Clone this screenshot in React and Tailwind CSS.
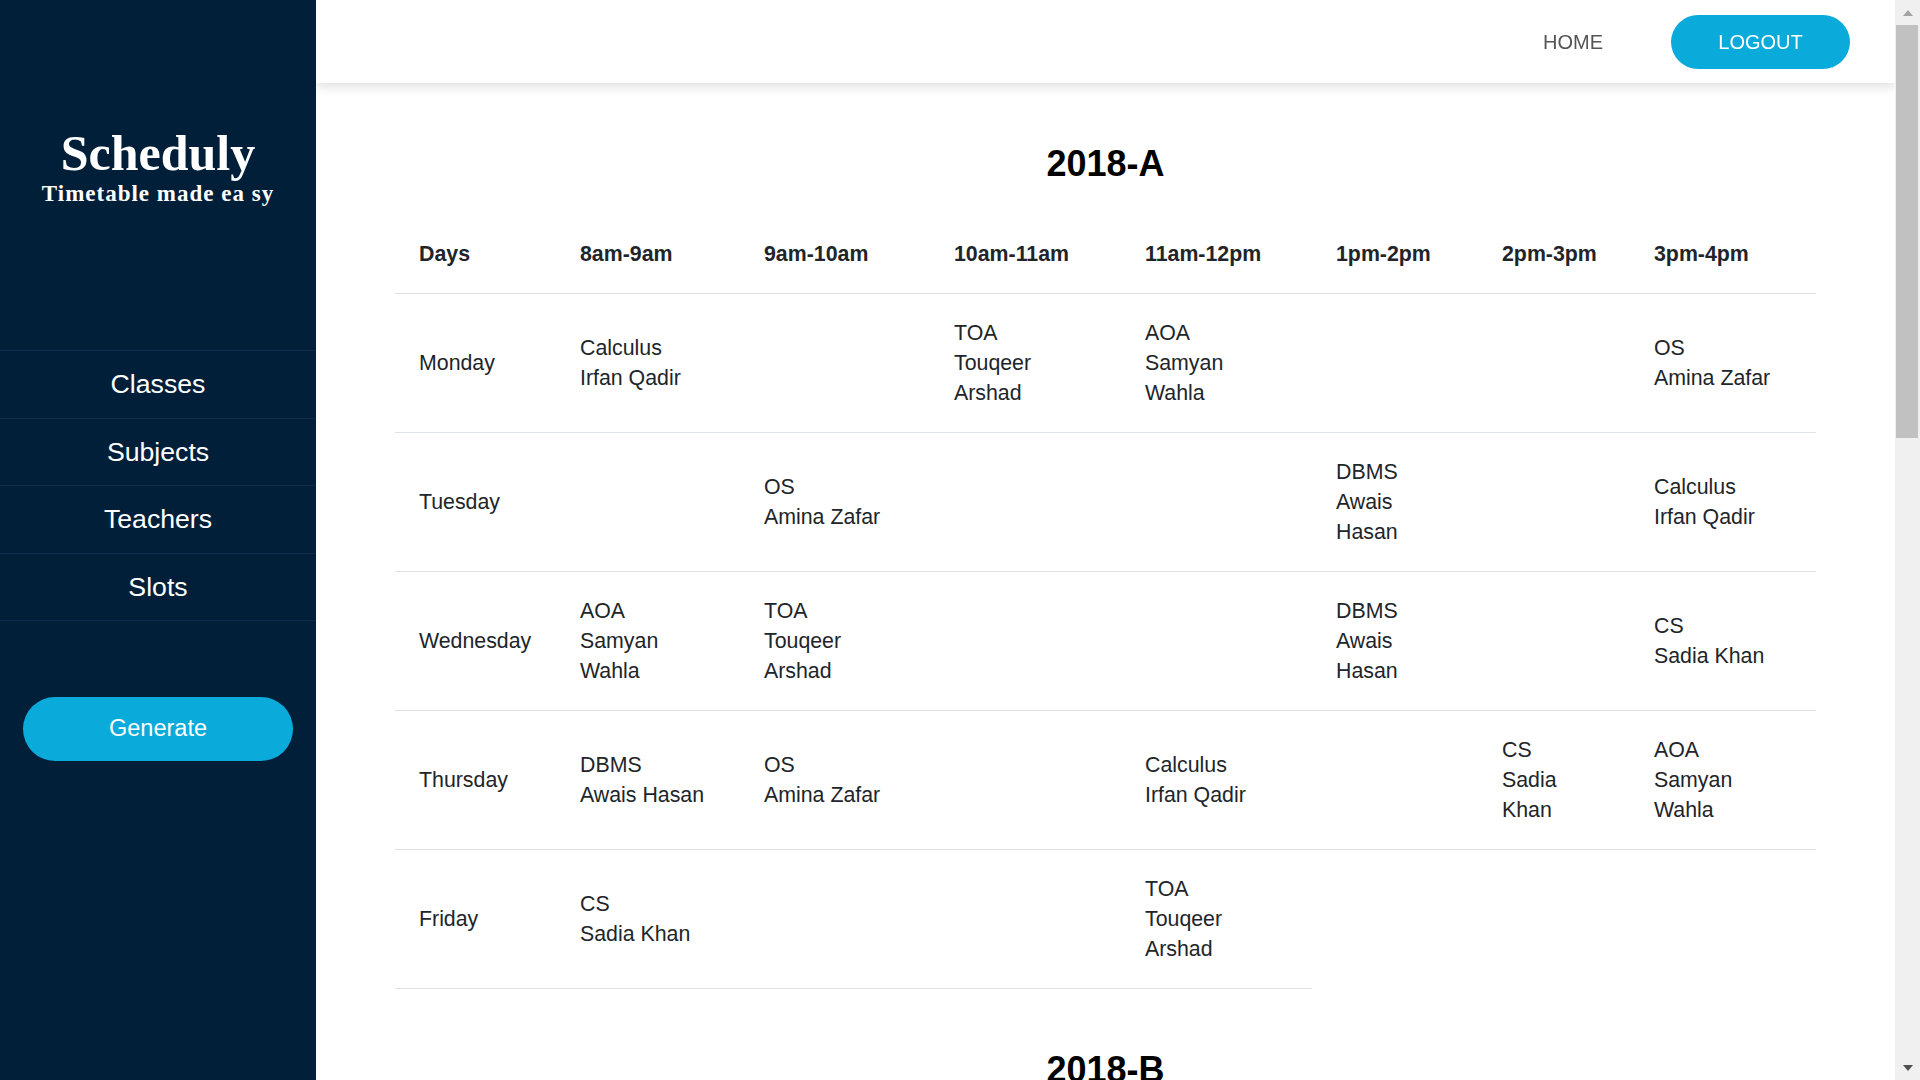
const slots = ['8am-9am', '9am-10am', '10am-11am', '11am-12pm', '1pm-2pm', '2pm-3pm', '3pm-4pm'];
const colWidths = ['w-[161px]', 'w-[184px]', 'w-[190px]', 'w-[191px]', 'w-[191px]', 'w-[166px]', 'w-[152px]', 'w-[186px]'];

const C = (subject, teacher) => ({ subject, teacher });

const timetables = [
  {
    name: '2018-A',
    rows: [
      ['Monday', [C('Calculus', 'Irfan Qadir'), null, C('TOA', 'Touqeer Arshad'), C('AOA', 'Samyan Wahla'), null, null, C('OS', 'Amina Zafar')]],
      ['Tuesday', [null, C('OS', 'Amina Zafar'), null, null, C('DBMS', 'Awais Hasan'), null, C('Calculus', 'Irfan Qadir')]],
      ['Wednesday', [C('AOA', 'Samyan Wahla'), C('TOA', 'Touqeer Arshad'), null, null, C('DBMS', 'Awais Hasan'), null, C('CS', 'Sadia Khan')]],
      ['Thursday', [C('DBMS', 'Awais Hasan'), C('OS', 'Amina Zafar'), null, C('Calculus', 'Irfan Qadir'), null, C('CS', 'Sadia Khan'), C('AOA', 'Samyan Wahla')]],
      ['Friday', [C('CS', 'Sadia Khan'), null, null, C('TOA', 'Touqeer Arshad')]],
    ],
  },
  {
    name: '2018-B',
    rows: [
      ['Monday', [C('OS', 'Amina Zafar'), C('DBMS', 'Awais Hasan'), null, C('CS', 'Sadia Khan'), null, C('TOA', 'Touqeer Arshad'), null]],
      ['Tuesday', [C('AOA', 'Samyan Wahla'), null, C('Calculus', 'Irfan Qadir'), null, C('OS', 'Amina Zafar'), null, C('DBMS', 'Awais Hasan')]],
      ['Wednesday', [null, C('CS', 'Sadia Khan'), C('TOA', 'Touqeer Arshad'), null, null, C('AOA', 'Samyan Wahla'), null]],
      ['Thursday', [C('Calculus', 'Irfan Qadir'), null, C('OS', 'Amina Zafar'), C('DBMS', 'Awais Hasan'), null, null, C('CS', 'Sadia Khan')]],
      ['Friday', [null, C('AOA', 'Samyan Wahla'), null, C('Calculus', 'Irfan Qadir'), C('TOA', 'Touqeer Arshad')]],
    ],
  },
  {
    name: '2019-A',
    rows: [
      ['Monday', [C('PF', 'Irfan Qadir'), null, C('DLD', 'Awais Hasan'), null, null, C('ENG', 'Amina Zafar'), null]],
      ['Tuesday', [null, C('ENG', 'Amina Zafar'), null, C('PF', 'Irfan Qadir'), null, null, C('DLD', 'Awais Hasan')]],
      ['Wednesday', [C('DLD', 'Awais Hasan'), null, null, C('ENG', 'Amina Zafar'), C('PF', 'Irfan Qadir'), null, null]],
      ['Thursday', [null, C('PF', 'Irfan Qadir'), C('ENG', 'Amina Zafar'), null, null, C('DLD', 'Awais Hasan'), null]],
      ['Friday', [C('ENG', 'Amina Zafar'), null, C('PF', 'Irfan Qadir')]],
    ],
  },
];

function Sidebar() {
  return (
    <aside className="w-[316px] shrink-0 h-screen bg-[#021f3a] flex flex-col text-white">
      <div className="pt-[126px] text-center font-['Liberation_Serif','Times_New_Roman',serif] font-bold">
        <div className="text-[50px] leading-[55px]">Scheduly</div>
        <div className="text-[23px] leading-[26px] tracking-[1px]">Timetable made ea sy</div>
      </div>

      <nav className="mt-[143px] border-t border-[#0b2d4b] font-['Liberation_Sans',Arial,sans-serif]">
        {['Classes', 'Subjects', 'Teachers', 'Slots'].map((item) => (
          <a
            key={item}
            href="#"
            className="h-[67.5px] flex items-center justify-center border-b border-[#0b2d4b] text-[26.67px] text-white"
          >
            {item}
          </a>
        ))}
      </nav>

      <button className="mt-[76px] mx-[23px] h-[64px] rounded-full bg-[#0aabdb] text-white text-[23.5px] font-['Liberation_Sans',Arial,sans-serif]">
        Generate
      </button>
    </aside>
  );
}

function Cell({ cell }) {
  return (
    <td className="px-[24px] py-[24px] align-middle border-b border-[#dee2e6]">
      {cell && (
        <>
          <div>{cell.subject}</div>
          <div>{cell.teacher}</div>
        </>
      )}
    </td>
  );
}

function Timetable({ name, rows }) {
  return (
    <section className="pt-[61px]">
      <h2 className="text-center text-[36px] leading-[40px] font-bold text-black mb-[31px]">{name}</h2>
      <table className="w-full table-fixed border-collapse text-[21.33px] leading-[30px] text-[#212529]">
        <colgroup>
          {colWidths.map((w, i) => (
            <col key={i} className={w} />
          ))}
        </colgroup>
        <thead>
          <tr>
            {['Days', ...slots].map((h) => (
              <th key={h} className="px-[24px] py-[24px] text-left font-bold border-b border-[#dee2e6]">
                {h}
              </th>
            ))}
          </tr>
        </thead>
        <tbody>
          {rows.map(([day, cells]) => (
            <tr key={day}>
              <td className="px-[24px] py-[24px] align-middle border-b border-[#dee2e6]">{day}</td>
              {cells.map((cell, i) => (
                <Cell key={i} cell={cell} />
              ))}
            </tr>
          ))}
        </tbody>
      </table>
    </section>
  );
}

function ScrollTrack() {
  return (
    <div className="w-[25px] shrink-0 h-screen bg-[#f0f0f0] flex flex-col">
      <div className="h-[25px] flex items-center justify-center">
        <svg width="10" height="6" viewBox="0 0 10 6">
          <path d="M5 0 L10 6 L0 6 Z" fill="#a3a3a3" />
        </svg>
      </div>
      <div className="h-[413px] ml-[1px] mr-[2px] bg-[#c1c1c1]" />
      <div className="flex-1" />
      <div className="h-[25px] flex items-center justify-center">
        <svg width="10" height="6" viewBox="0 0 10 6">
          <path d="M0 0 L10 0 L5 6 Z" fill="#505050" />
        </svg>
      </div>
    </div>
  );
}

export default function App() {
  return (
    <div className="flex h-screen w-full overflow-hidden bg-white font-['Liberation_Sans',Arial,sans-serif]">
      <Sidebar />

      <div className="flex-1 h-screen overflow-y-auto">
        <header className="sticky top-0 z-10 h-[83px] bg-white flex items-center justify-end gap-[68px] pr-[45px] shadow-[0_4px_10px_rgba(0,0,0,0.12)]">
          <a href="#" className="text-[20px] text-[#555]">HOME</a>
          <button className="w-[179px] h-[54px] rounded-full bg-[#0aabdb] text-white text-[20px]">LOGOUT</button>
        </header>

        <main className="px-[79px] pb-[40px]">
          {timetables.map((t) => (
            <Timetable key={t.name} name={t.name} rows={t.rows} />
          ))}
        </main>
      </div>

      <ScrollTrack />
    </div>
  );
}
